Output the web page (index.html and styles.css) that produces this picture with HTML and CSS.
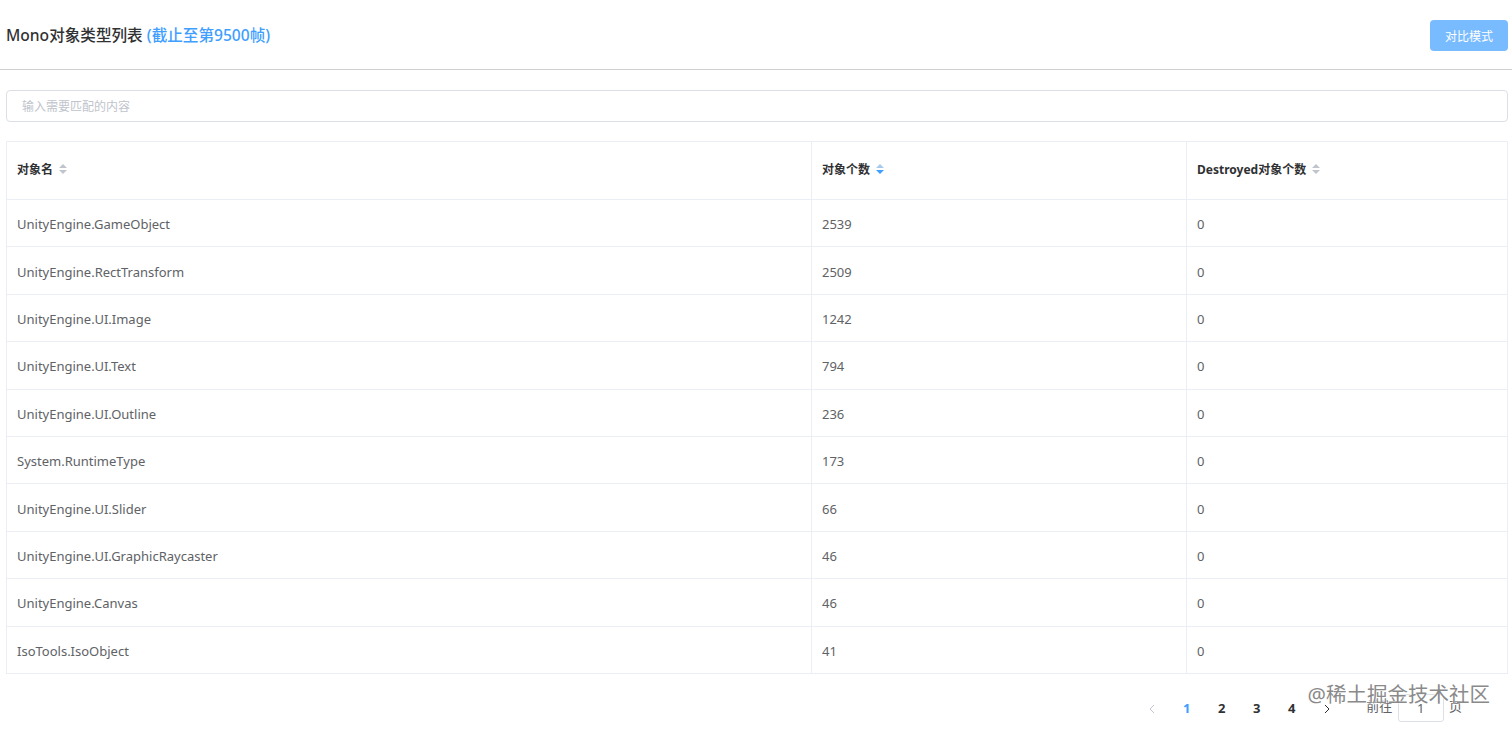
FILE: index.html
```html
<!DOCTYPE html>
<html lang="zh-CN">
<head>
    <meta charset="UTF-8">
    <meta name="viewport" content="width=device-width, initial-scale=1.0">
    <title>Mono对象类型列表</title>
    <link rel="stylesheet" href="styles.css">
</head>
<body>

<div class="page-header">
    <h2 class="page-title">Mono对象类型列表 <span class="frame-tip">(截止至第9500帧)</span></h2>
    <button class="compare-btn">对比模式</button>
</div>

<div class="content">
    <input class="search-input" type="text" placeholder="输入需要匹配的内容">

    <table class="mono-table">
        <colgroup>
            <col style="width: 805px">
            <col style="width: 375px">
            <col>
        </colgroup>
        <thead>
            <tr>
                <th>对象名 <span class="sort"><i class="up"></i><i class="down"></i></span></th>
                <th>对象个数 <span class="sort desc"><i class="up"></i><i class="down"></i></span></th>
                <th>Destroyed对象个数 <span class="sort"><i class="up"></i><i class="down"></i></span></th>
            </tr>
        </thead>
        <tbody>
            <tr><td>UnityEngine.GameObject</td><td>2539</td><td>0</td></tr>
            <tr><td>UnityEngine.RectTransform</td><td>2509</td><td>0</td></tr>
            <tr><td>UnityEngine.UI.Image</td><td>1242</td><td>0</td></tr>
            <tr><td>UnityEngine.UI.Text</td><td>794</td><td>0</td></tr>
            <tr><td>UnityEngine.UI.Outline</td><td>236</td><td>0</td></tr>
            <tr><td>System.RuntimeType</td><td>173</td><td>0</td></tr>
            <tr><td>UnityEngine.UI.Slider</td><td>66</td><td>0</td></tr>
            <tr><td>UnityEngine.UI.GraphicRaycaster</td><td>46</td><td>0</td></tr>
            <tr><td>UnityEngine.Canvas</td><td>46</td><td>0</td></tr>
            <tr><td>IsoTools.IsoObject</td><td>41</td><td>0</td></tr>
        </tbody>
    </table>

    <div class="pagination">
        <button class="page-btn arrow disabled">
            <svg width="8" height="10" viewBox="0 0 8 10"><path d="M6 1 L2 5 L6 9" fill="none" stroke="currentColor" stroke-width="1"/></svg>
        </button>
        <button class="page-btn active">1</button>
        <button class="page-btn">2</button>
        <button class="page-btn">3</button>
        <button class="page-btn">4</button>
        <button class="page-btn arrow">
            <svg width="8" height="10" viewBox="0 0 8 10"><path d="M2 1 L6 5 L2 9" fill="none" stroke="currentColor" stroke-width="1"/></svg>
        </button>
        <span class="jumper">前往 <input class="jump-input" type="text" value="1"> 页</span>
        <!-- site watermark sitting over the pager -->
        <span class="watermark">@稀土掘金技术社区</span>
    </div>
</div>

</body>
</html>
```

FILE: styles.css
```css
body {
    margin: 0;
    font-family: "Noto Sans", "Noto Sans CJK SC", sans-serif;
    background-color: #fff;
    color: #606266;
}

.page-header {
    display: flex;
    align-items: center;
    justify-content: space-between;
    height: 69px;
    padding: 0 4px 0 6px;
    border-bottom: 1px solid #cfcfcf;
}

.page-title {
    margin: 0;
    font-size: 15.6px;
    font-weight: 500;
    color: #303133;
}

.frame-tip {
    color: #409eff;
}

.compare-btn {
    font-family: inherit;
    font-size: 12px;
    color: #fff;
    background-color: #79bbff;
    border: none;
    border-radius: 4px;
    width: 78px;
    height: 31px;
    margin-top: 2px;
}

.content {
    padding: 20px 4px 0 6px;
    position: relative;
}

.search-input {
    display: block;
    box-sizing: border-box;
    width: 100%;
    height: 32px;
    padding: 0 15px;
    font-family: inherit;
    font-size: 12px;
    color: #606266;
    border: 1px solid #dcdfe6;
    border-radius: 4px;
    outline: none;
}

.search-input::placeholder {
    color: #c0c4cc;
}

.mono-table {
    width: 100%;
    margin-top: 19px;
    border-collapse: collapse;
    table-layout: fixed;
    font-size: 13px;
    border: 1px solid #ebeef5;
}

.mono-table th,
.mono-table td {
    text-align: left;
    padding: 0 10px;
    border-bottom: 1px solid #ebeef5;
    border-right: 1px solid #ebeef5;
}

.mono-table th {
    height: 53px;
    padding-bottom: 4px;
    font-size: 12px;
    font-weight: bold;
    color: #303133;
}

.mono-table td {
    height: 44.4px;
    padding-top: 2px;
    color: #606266;
}

.sort {
    display: inline-flex;
    flex-direction: column;
    vertical-align: middle;
    margin-left: 3px;
    gap: 2px;
    position: relative;
    top: -1px;
}

.sort i {
    width: 0;
    height: 0;
    border-left: 4px solid transparent;
    border-right: 4px solid transparent;
}

.sort .up {
    border-bottom: 4px solid #c0c4cc;
}

.sort .down {
    border-top: 4px solid #c0c4cc;
}

.sort.desc .up {
    border-bottom-color: #a8c9ec;
}

.sort.desc .down {
    border-top-color: #409eff;
}

.pagination {
    display: flex;
    justify-content: flex-end;
    align-items: center;
    height: 28px;
    margin-top: 20px;
    padding-right: 46px;
    font-size: 13px;
    color: #303133;
    position: relative;
}

.page-btn {
    font-family: inherit;
    font-size: 13px;
    font-weight: bold;
    color: #303133;
    background: none;
    border: none;
    min-width: 35px;
    height: 28px;
    padding: 0 4px;
}

.page-btn.active {
    color: #409eff;
}

.page-btn.arrow {
    color: #303133;
    padding-top: 3px;
}

.page-btn.disabled {
    color: #c0c4cc;
}

.jumper {
    margin-left: 22px;
    color: #606266;
    font-size: 13px;
}

.jump-input {
    box-sizing: border-box;
    width: 46px;
    height: 28px;
    margin: 0 2px;
    text-align: center;
    font-family: inherit;
    font-size: 13px;
    color: #606266;
    border: 1px solid #dcdfe6;
    border-radius: 3px;
    outline: none;
    vertical-align: middle;
}

.watermark {
    position: absolute;
    right: 18px;
    top: -16px;
    font-size: 20.5px;
    color: #8a8a8a;
    text-shadow: 0 0 2px #fff, 0 0 2px #fff;
    pointer-events: none;
}
```
